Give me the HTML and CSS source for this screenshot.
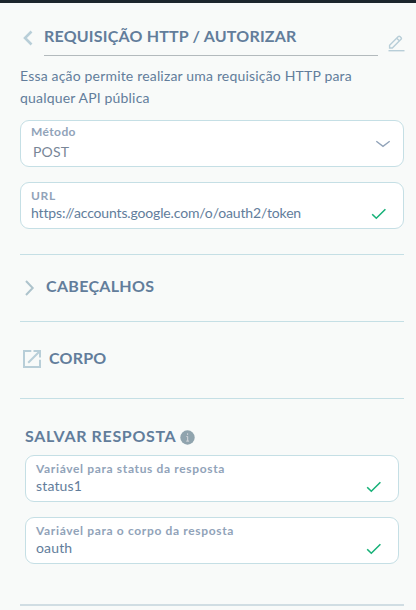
FILE: index.html
```html
<!DOCTYPE html>
<html lang="pt-BR">
<head>
  <meta charset="UTF-8" />
  <meta name="viewport" content="width=device-width, initial-scale=1.0" />
  <title>Requisição HTTP</title>
  <link rel="stylesheet" href="styles.css">
</head>
<body>
  <div class="panel">
    <header class="header">
      <svg class="back" width="12" height="16" viewBox="0 0 12 16"><path d="M9.5 1.5L3 8l6.5 6.5" /></svg>
      <h1>REQUISIÇÃO HTTP / AUTORIZAR</h1>
      <svg class="edit" width="17" height="17" viewBox="0 0 17 17">
        <path d="M1.6 13V10.2L10.3 1.6Q11.2.9 12 1.6L13.1 2.7Q13.8 3.5 13 4.3L4.3 13ZM8.8 3.2L11.5 5.9" />
        <path d="M.5 15.7H16.5" />
      </svg>
    </header>

    <p class="description">Essa ação permite realizar uma requisição HTTP para<br>qualquer API pública</p>

    <div class="field select">
      <div class="text">
        <label>Método</label>
        <span class="value">POST</span>
      </div>
      <svg class="arrow" width="16" height="8" viewBox="0 0 16 8"><path d="M1.3 1.3L8 6.3l6.7-5" /></svg>
    </div>

    <div class="field">
      <div class="text">
        <label>URL</label>
        <span class="value url">https://accounts.google.com/o/oauth2/token</span>
      </div>
      <svg class="check" width="16" height="12" viewBox="0 0 16 12"><path d="M1.2 6.2L5.3 10.2 14.4 1.3" /></svg>
    </div>

    <section class="row headers">
      <svg class="chevron" width="12" height="16" viewBox="0 0 12 16"><path d="M2 1l6.7 7L2 15" /></svg>
      <h2>CABEÇALHOS</h2>
    </section>

    <section class="row body-row">
      <svg class="open" width="20" height="20" viewBox="0 0 20 20">
        <path d="M9.3 2H2v16h16v-7.3M11.5 2H18v6.5M17.7 2.3L6.2 13.8" />
      </svg>
      <h2>CORPO</h2>
    </section>

    <section class="save">
      <div class="save-title">
        <h2>SALVAR RESPOSTA</h2>
        <svg width="15" height="15" viewBox="0 0 15 15">
          <circle cx="7.5" cy="7.5" r="7.2" fill="#90a4ae" />
          <path d="M7.6 3.3v1.6M6.4 6.5h1.3v4.6M6.2 11.1h2.9" fill="none" stroke="#d5d8dc" />
        </svg>
      </div>
      <div class="field">
        <div class="text">
          <label>Variável para status da resposta</label>
          <span class="value">status1</span>
        </div>
        <svg class="check" width="16" height="12" viewBox="0 0 16 12"><path d="M1.2 6.2L5.3 10.2 14.4 1.3" /></svg>
      </div>
      <div class="field">
        <div class="text">
          <label>Variável para o corpo da resposta</label>
          <span class="value">oauth</span>
        </div>
        <svg class="check" width="16" height="12" viewBox="0 0 16 12"><path d="M1.2 6.2L5.3 10.2 14.4 1.3" /></svg>
      </div>
    </section>
  </div>
</body>
</html>
```
FILE: styles.css
```css
* {
  box-sizing: border-box;
}

body {
  margin: 0;
  height: 610px;
  overflow: hidden;
  background: #f8faf9;
  border-top: 3px solid #1c262d;
  font-family: Lato, "Open Sans", sans-serif;
  font-size: 14px;
  color: #627d9b;
}

.panel {
  padding: 21px 11px 0 20px;
}

h1, h2 {
  margin: 0;
  font-size: 16px;
  font-weight: 700;
  line-height: 24px;
  color: #627d9b;
  white-space: nowrap;
  letter-spacing: 0.2px;
}

svg {
  flex: none;
}

.back, .edit, .arrow, .check, .chevron, .open {
  fill: none;
  stroke: #b8ced8;
  stroke-width: 2;
}

.header {
  display: flex;
  align-items: flex-start;
}

.back {
  margin: 6px 10px 0 2px;
  stroke-width: 2.6;
}

.header h1 {
  width: 334px;
  height: 32px;
  border-bottom: 1px solid #b3babd;
}

.edit {
  margin: 11px 0 0 10px;
  stroke-width: 1.4;
}

.description {
  margin: 9px 0 11px;
  line-height: 22px;
  white-space: nowrap;
  letter-spacing: 0.18px;
}

.field {
  display: flex;
  justify-content: space-between;
  height: 47px;
  margin: 0 1px 15px 0;
  padding: 5px 16px 0 10px;
  background: #fff;
  border: 1px solid #c5dfe5;
  border-radius: 9px;
}

.text {
  display: flex;
  flex-direction: column;
}

label {
  font-size: 12px;
  font-weight: 700;
  line-height: 15px;
  letter-spacing: 0.65px;
  color: #91a3b9;
}

.value {
  line-height: 19px;
  letter-spacing: 0.15px;
}

.url {
  letter-spacing: -0.15px;
}

.select {
  padding: 3px 12px 0 10px;
}

.select label {
  letter-spacing: 0.4px;
}

.select .value {
  margin: 3px 0 0 2px;
  color: #788697;
}

.arrow {
  margin-top: 16px;
  stroke: #91a3b9;
  stroke-width: 1.4;
}

.check {
  margin-top: 20px;
  stroke: #17b178;
  stroke-width: 1.6;
}

.row {
  display: flex;
  align-items: center;
  margin-right: 1px;
  border-top: 1px solid #c5dfe5;
}

.headers {
  height: 67px;
  margin-top: 25px;
  padding-left: 4px;
}

.headers h2 {
  margin: -4px 0 0 10px;
  letter-spacing: 0.3px;
}

.chevron {
  stroke: #adc3cc;
}

.body-row {
  height: 77px;
  padding: 0 0 2px 2px;
}

.body-row h2 {
  margin: -2px 0 0 7px;
}

.save {
  height: 208px;
  margin-right: 1px;
  padding: 25px 4px 0 5px;
  border-top: 1px solid #c5dfe5;
  border-bottom: 2px solid #d0dde3;
}

.save-title {
  display: flex;
  align-items: center;
  gap: 4px;
  height: 24px;
  margin-bottom: 7px;
}

.save-title h2 {
  letter-spacing: 0.65px;
}

.save-title svg {
  margin-top: 3px;
}
```
